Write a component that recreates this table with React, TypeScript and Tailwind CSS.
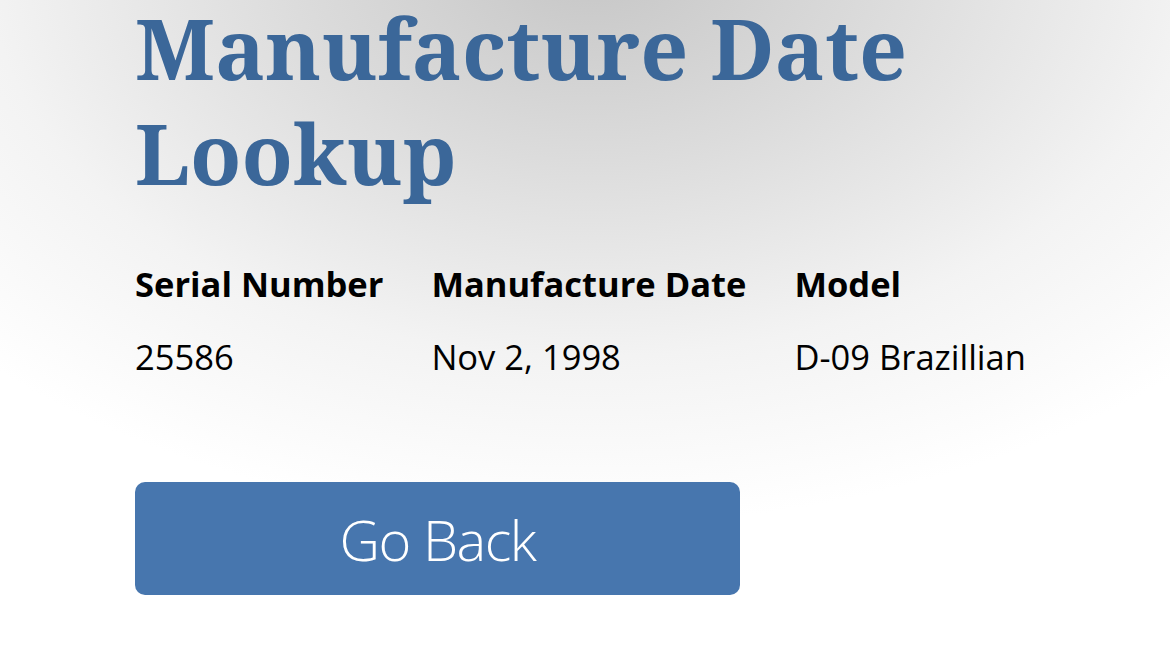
export default function App() {
  const rows = [{ serial: "25586", date: "Nov 2, 1998", model: "D-09 Brazillian" }];

  return (
    <div className="min-h-screen w-full bg-white bg-[radial-gradient(ellipse_860px_560px_at_590px_-30px,#c6c6c6_0%,#dcdcdc_35%,#f3f3f3_70%,#ffffff_100%)]">
      <div className="px-[135px] pb-16">
        <h1 className="-mt-[5px] font-['Noto_Serif','DejaVu_Serif',serif] text-[84px] font-bold leading-[105px] text-[#3b6799]">
          Manufacture Date Lookup
        </h1>

        <table className="mt-[56px] whitespace-nowrap font-['Open_Sans','Noto_Sans',sans-serif] text-[34.5px] text-black">
          <thead>
            <tr>
              <th className="pr-12 pb-[27px] text-left font-bold leading-[46px]">Serial Number</th>
              <th className="pr-12 pb-[27px] text-left font-bold leading-[46px]">Manufacture Date</th>
              <th className="pr-12 pb-[27px] text-left font-bold leading-[46px]">Model</th>
            </tr>
          </thead>
          <tbody>
            {rows.map((r) => (
              <tr key={r.serial}>
                <td className="pr-12 leading-[46px]">{r.serial}</td>
                <td className="pr-12 leading-[46px]">{r.date}</td>
                <td className="pr-12 leading-[46px]">{r.model}</td>
              </tr>
            ))}
          </tbody>
        </table>

        <button
          type="button"
          className="mt-[102px] flex h-[113px] w-[605px] items-center justify-center rounded-[10px] bg-[#4776ae] font-['Open_Sans','Noto_Sans',sans-serif] text-[56px] font-[350] tracking-[-1.5px] text-white"
        >
          Go Back
        </button>
      </div>
    </div>
  );
}
